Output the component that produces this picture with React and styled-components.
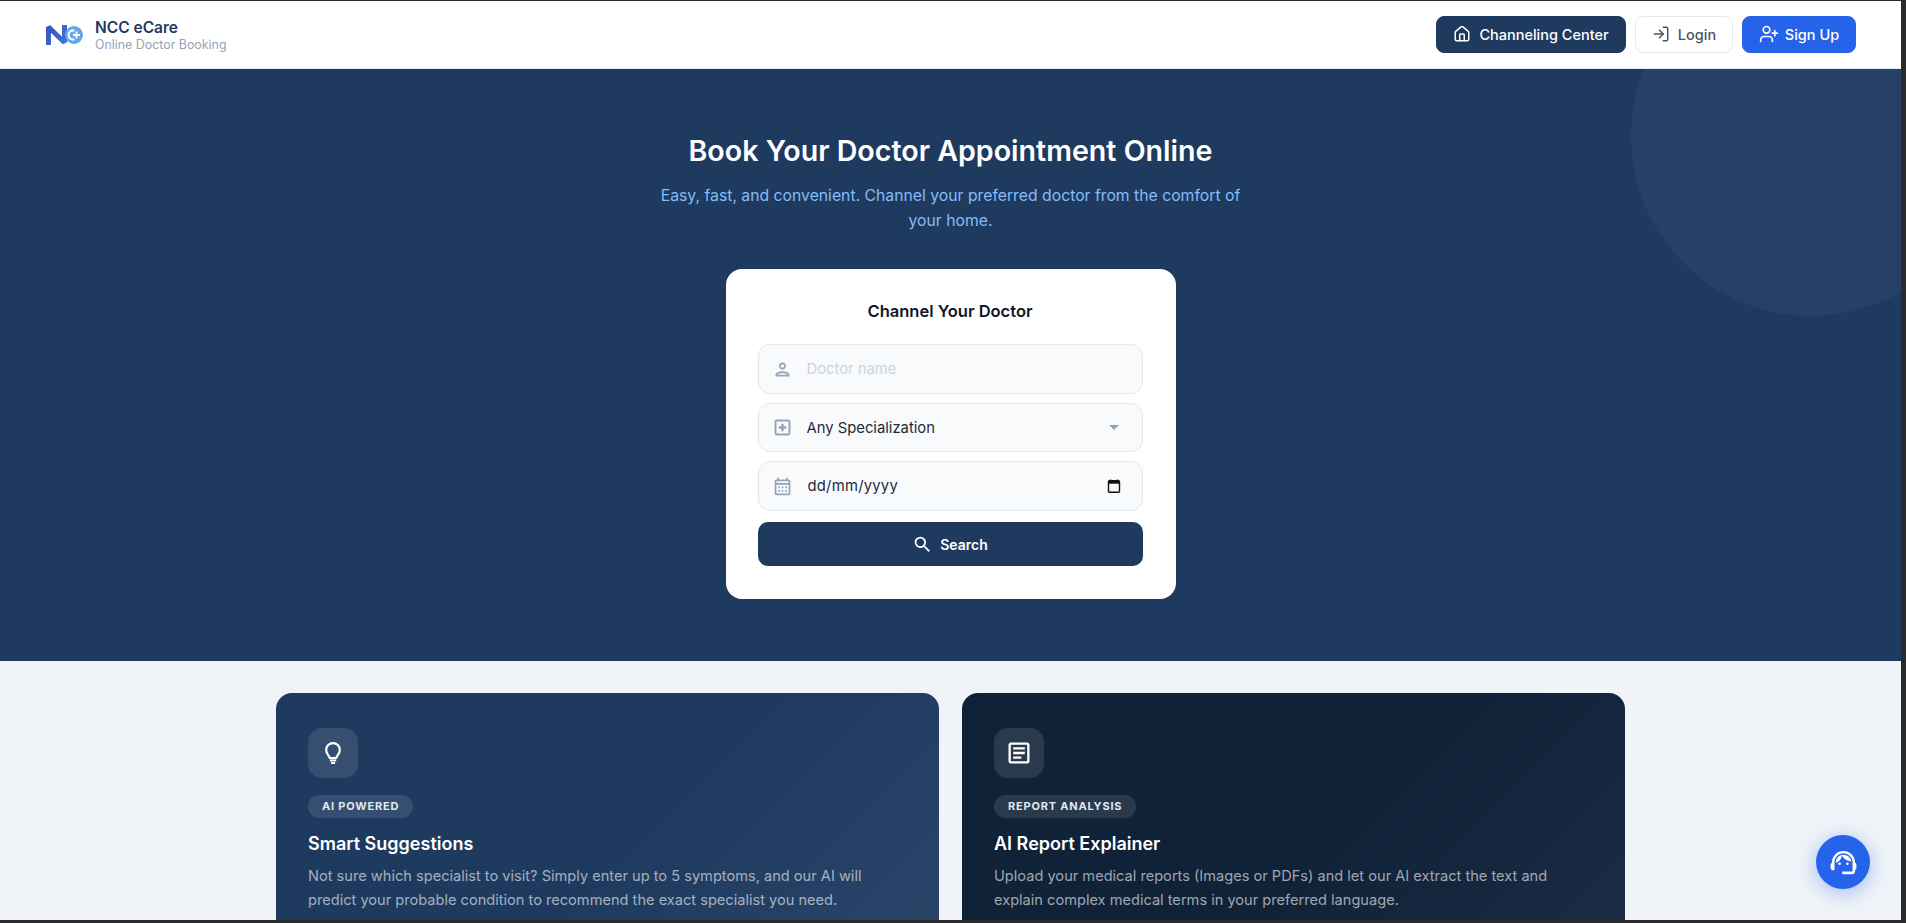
import React from 'react';
import styled, { createGlobalStyle } from 'styled-components';
import { House, LogIn, UserPlus } from 'lucide-react';
import {
  MdOutlinePerson,
  MdOutlineCalendarMonth,
  MdSearch,
  MdOutlineArticle,
  MdOutlineSupportAgent,
} from 'react-icons/md';

const GlobalStyle = createGlobalStyle`
  * { box-sizing: border-box; }
  html, body { margin: 0; padding: 0; height: 100%; overflow: hidden; }
  body { font-family: Inter, "Liberation Sans", sans-serif; background: #2b2b2b; }
`;

const Frame = styled.div`
  position: relative;
  width: 1906px;
  height: 923px;
  padding: 1px 5px 3px 0;
  background: #2b2b2b;
  overflow: hidden;
`;

const Page = styled.div`
  position: relative;
  height: 100%;
  background: #f0f4f8;
  overflow: hidden;
`;

const Nav = styled.header`
  height: 68px;
  display: flex;
  align-items: center;
  justify-content: space-between;
  padding: 0 45px 0 46px;
  background: #fff;
  border-bottom: 1px solid #e2e8f0;
`;

const Brand = styled.div`
  display: flex;
  align-items: center;
  gap: 12px;
`;

const BrandText = styled.div`
  display: flex;
  flex-direction: column;
`;

const BrandName = styled.span`
  font-size: 15.5px;
  line-height: 19px;
  font-weight: 600;
  color: #1e3a5f;
`;

const BrandSub = styled.span`
  font-size: 12.4px;
  line-height: 15px;
  color: #94a3b8;
`;

const NavActions = styled.nav`
  display: flex;
  align-items: center;
  gap: 9px;
`;

const NavButton = styled.button`
  height: 37px;
  display: flex;
  align-items: center;
  justify-content: center;
  gap: ${(p) => p.$gap || 8}px;
  width: ${(p) => p.$width}px;
  padding: 0 0 1px;
  border-radius: 8px;
  font-family: inherit;
  font-size: 14.5px;
  font-weight: 500;
  color: ${(p) => p.$color};
  background: ${(p) => p.$bg};
  border: 1px solid ${(p) => p.$border || p.$bg};
  svg { flex: none; }
`;

const Hero = styled.section`
  position: relative;
  height: 592px;
  padding-top: 62px;
  display: flex;
  flex-direction: column;
  align-items: center;
  background: #1e3a5f;
  overflow: hidden;
`;

const HeroCircle = styled.div`
  position: absolute;
  top: -113px;
  right: -90px;
  width: 360px;
  height: 360px;
  border-radius: 50%;
  background: rgba(255, 255, 255, 0.04);
`;

const HeroTitle = styled.h1`
  margin: 0;
  font-size: 28.6px;
  line-height: 40px;
  font-weight: 600;
  color: #fff;
`;

const HeroSub = styled.p`
  margin: 12px 0 0;
  width: 600px;
  font-size: 15.75px;
  line-height: 25px;
  text-align: center;
  color: #85bdf8;
`;

const SearchCard = styled.form`
  position: relative;
  margin-top: 36px;
  width: 450px;
  height: 330px;
  padding: 31px 33px 33px 32px;
  display: flex;
  flex-direction: column;
  background: #fff;
  border-radius: 16px;
`;

const SearchTitle = styled.h2`
  margin: 0 0 22px;
  font-size: 16.5px;
  line-height: 22px;
  font-weight: 600;
  text-align: center;
  color: #0f172a;
`;

const Field = styled.div`
  height: ${(p) => p.$height || 50}px;
  margin-bottom: 9px;
  padding: 0 21px 0 13px;
  display: flex;
  align-items: center;
  gap: 14px;
  background: #f8fafc;
  border: 1px solid #e2e8f0;
  border-radius: 12px;
  > svg:first-child { font-size: 21px; color: #94a3b8; flex: none; }
`;

const FieldInput = styled.input`
  flex: 1;
  min-width: 0;
  padding: 0 0 0 ${(p) => p.$inset || 0}px;
  border: 0;
  outline: 0;
  background: transparent;
  font-family: inherit;
  font-size: 14.8px;
  letter-spacing: ${(p) => p.$spacing || 0}px;
  color: #1e293b;
  &::placeholder { color: #cbd5e1; opacity: 1; }
`;

const FieldSelect = styled.select`
  flex: 1;
  min-width: 0;
  padding: 0;
  border: 0;
  outline: 0;
  background: transparent;
  appearance: none;
  font-family: inherit;
  font-size: 14.8px;
  color: #1e293b;
`;

const Caret = styled.span`
  width: 0;
  height: 0;
  margin-right: 2px;
  border-left: 5px solid transparent;
  border-right: 5px solid transparent;
  border-top: 5px solid #94a3b8;
`;

const SearchButton = styled.button`
  height: 44px;
  margin-top: 2px;
  flex: none;
  display: flex;
  align-items: center;
  justify-content: center;
  gap: 7px;
  border: 0;
  border-radius: 10px;
  background: #1e3a5f;
  color: #fff;
  font-family: inherit;
  font-size: 14px;
  font-weight: 600;
  svg { font-size: 21px; }
`;

const Features = styled.div`
  width: 1349px;
  margin: 32px auto 0;
  display: grid;
  grid-template-columns: 663px 663px;
  gap: 23px;
`;

const FeatureCard = styled.article`
  padding: 35px 32px;
  border-radius: 16px;
  background: linear-gradient(135deg, ${(p) => p.$from} 55%, ${(p) => p.$to} 100%);
`;

const FeatureIcon = styled.div`
  width: 50px;
  height: 50px;
  display: flex;
  align-items: center;
  justify-content: center;
  border-radius: 14px;
  background: rgba(255, 255, 255, 0.11);
  color: #fff;
  svg { font-size: 28px; }
`;

const Badge = styled.span`
  display: inline-block;
  margin-top: 17px;
  height: 23px;
  padding: 0 14px;
  border-radius: 12px;
  background: rgba(255, 255, 255, 0.11);
  color: #e2e8f0;
  font-size: 11px;
  line-height: 23px;
  font-weight: 700;
  letter-spacing: 0.8px;
`;

const FeatureTitle = styled.h3`
  margin: 13px 0 0;
  font-size: 18px;
  line-height: 26px;
  font-weight: 600;
  color: #fff;
`;

const FeatureText = styled.p`
  margin: 7px 0 0;
  font-size: 14.6px;
  line-height: 24px;
  color: rgba(255, 255, 255, 0.6);
`;

const ChatFab = styled.button`
  position: absolute;
  right: 31px;
  bottom: 31px;
  width: 54px;
  height: 54px;
  padding: 0;
  display: flex;
  align-items: center;
  justify-content: center;
  border: 0;
  border-radius: 50%;
  background: #2563eb;
  color: #fff;
  box-shadow: 0 4px 20px rgba(37, 99, 235, 0.4);
  svg { font-size: 31px; }
`;

function Logo() {
  return (
    <svg width="37" height="22" viewBox="0 0 37 22" aria-label="NCC logo">
      <defs>
        <linearGradient id="logoN" x1="0" y1="0" x2="1" y2="1">
          <stop offset="0" stopColor="#3a52c0" />
          <stop offset="1" stopColor="#3f74da" />
        </linearGradient>
      </defs>
      <polyline
        points="2.5,21 2.5,3 18.5,18.5 18.5,1"
        fill="none"
        stroke="url(#logoN)"
        strokeWidth="5"
        strokeLinejoin="bevel"
      />
      <circle cx="28" cy="11" r="9" fill="#62a6ec" />
      <path d="M28.5 6.6 A4.6 4.6 0 1 0 28.5 15.4" fill="none" stroke="#fff" strokeWidth="2" />
      <path d="M27 11 H34 M30.5 7.5 V14.5" fill="none" stroke="#fff" strokeWidth="1.8" />
    </svg>
  );
}

function AddBoxIcon() {
  return (
    <svg width="21" height="21" viewBox="0 0 21 21" fill="none" stroke="currentColor" aria-hidden="true">
      <rect x="3.5" y="3.5" width="14" height="14" rx="1.2" strokeWidth="1.9" />
      <path d="M10.5 6.7 V14.3 M6.7 10.5 H14.3" strokeWidth="2.3" />
    </svg>
  );
}

function BulbIcon() {
  return (
    <svg width="28" height="28" viewBox="0 0 28 28" fill="none" stroke="currentColor" aria-hidden="true">
      <path
        d="M10.6 19 C10.6 16.8 7.2 15.4 7.2 10.9 A6.8 6.8 0 0 1 20.8 10.9 C20.8 15.4 17.4 16.8 17.4 19 Z"
        strokeWidth="2.2"
        strokeLinejoin="round"
      />
      <path d="M10.8 21.4 H17.2" strokeWidth="2" />
      <path d="M12 24 H16" strokeWidth="2" />
    </svg>
  );
}

function DatePickerIcon() {
  return (
    <svg width="14" height="14" viewBox="0 0 14 14" aria-hidden="true">
      <path d="M3.5 0.5 V2 M10.5 0.5 V2" stroke="#111" strokeWidth="1.4" />
      <rect x="1.5" y="1.7" width="11" height="11.5" rx="1" fill="none" stroke="#111" strokeWidth="1.4" />
      <rect x="1.5" y="1.7" width="11" height="3" fill="#111" />
    </svg>
  );
}

const features = [
  {
    icon: <BulbIcon />,
    badge: 'AI POWERED',
    title: 'Smart Suggestions',
    text: 'Not sure which specialist to visit? Simply enter up to 5 symptoms, and our AI will predict your probable condition to recommend the exact specialist you need.',
    from: '#1e3a5f',
    to: '#2b4569',
  },
  {
    icon: <MdOutlineArticle />,
    badge: 'REPORT ANALYSIS',
    title: 'AI Report Explainer',
    text: 'Upload your medical reports (Images or PDFs) and let our AI extract the text and explain complex medical terms in your preferred language.',
    from: '#0f2238',
    to: '#1b2c44',
  },
];

export default function App() {
  return (
    <Frame>
      <GlobalStyle />
      <Page>
        <Nav>
          <Brand>
            <Logo />
            <BrandText>
              <BrandName>NCC eCare</BrandName>
              <BrandSub>Online Doctor Booking</BrandSub>
            </BrandText>
          </Brand>
          <NavActions>
            <NavButton $width={190} $bg="#1e3a5f" $color="#fff">
              <House size={18} />
              Channeling Center
            </NavButton>
            <NavButton $width={98} $bg="#fff" $border="#e2e8f0" $color="#475569">
              <LogIn size={18} />
              Login
            </NavButton>
            <NavButton $width={114} $gap={6} $bg="#2563eb" $color="#fff">
              <UserPlus size={20} />
              Sign Up
            </NavButton>
          </NavActions>
        </Nav>

        <Hero>
          <HeroCircle />
          <HeroTitle>Book Your Doctor Appointment Online</HeroTitle>
          <HeroSub>
            Easy, fast, and convenient. Channel your preferred doctor from the comfort of your home.
          </HeroSub>
          <SearchCard onSubmit={(e) => e.preventDefault()}>
            <SearchTitle>Channel Your Doctor</SearchTitle>
            <Field>
              <MdOutlinePerson />
              <FieldInput placeholder="Doctor name" />
            </Field>
            <Field $height={49}>
              <AddBoxIcon />
              <FieldSelect defaultValue="">
                <option value="">Any Specialization</option>
              </FieldSelect>
              <Caret />
            </Field>
            <Field>
              <MdOutlineCalendarMonth />
              <FieldInput defaultValue="dd/mm/yyyy" readOnly $inset={1} $spacing={0.25} />
              <DatePickerIcon />
            </Field>
            <SearchButton type="submit">
              <MdSearch />
              Search
            </SearchButton>
          </SearchCard>
        </Hero>

        <Features>
          {features.map((f) => (
            <FeatureCard key={f.title} $from={f.from} $to={f.to}>
              <FeatureIcon>{f.icon}</FeatureIcon>
              <Badge>{f.badge}</Badge>
              <FeatureTitle>{f.title}</FeatureTitle>
              <FeatureText>{f.text}</FeatureText>
            </FeatureCard>
          ))}
        </Features>

        <ChatFab aria-label="Support">
          <MdOutlineSupportAgent />
        </ChatFab>
      </Page>
    </Frame>
  );
}
